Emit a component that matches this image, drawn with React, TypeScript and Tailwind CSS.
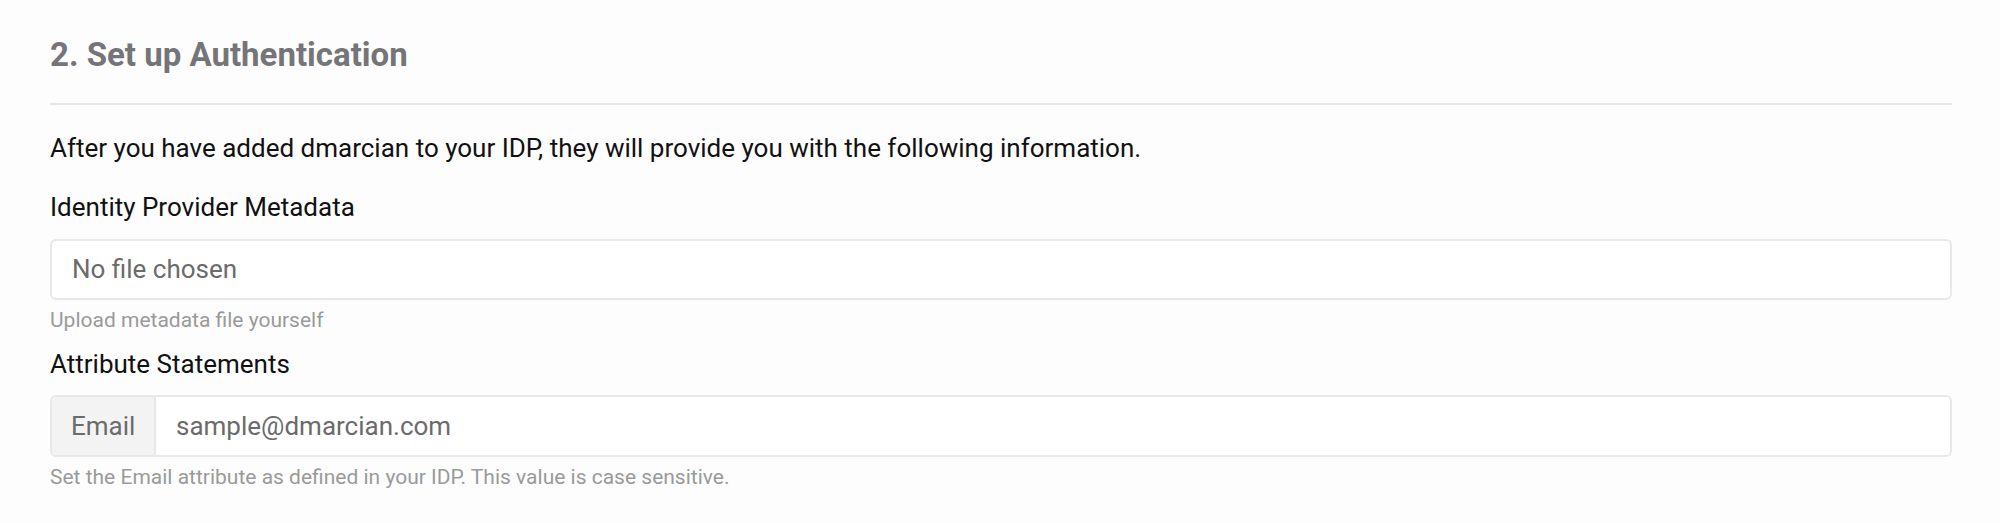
export default function App() {
  return (
    <div className="min-h-screen bg-[#fdfdfd] font-['Roboto',sans-serif]">
      <div className="pl-[50px] pr-[48px] pt-[35px]">
        <h2 className="text-[33px] leading-[40px] font-bold text-[#757579]">2. Set up Authentication</h2>
        <div className="mt-[28px] h-[2px] bg-[#e6e6e6]" />

        <p className="mt-[27px] text-[26px] leading-[32px] text-[#111]">
          After you have added dmarcian to your IDP, they will provide you with the following information.
        </p>

        <div className="mt-[27px]">
          <label className="block text-[26px] leading-[32px] text-[#111]">Identity Provider Metadata</label>
          <div className="mt-[16px] flex h-[61px] items-center rounded-[6px] border-2 border-[#e8e8e8] bg-white pl-[20px] text-[26px] text-[#6b6b6b]">
            No file chosen
          </div>
          <p className="mt-[8px] text-[21px] leading-[24px] text-[#9a9a9a]">Upload metadata file yourself</p>
        </div>

        <div className="mt-[16px]">
          <label className="block text-[26px] leading-[32px] text-[#111]">Attribute Statements</label>
          <div className="mt-[15px] flex h-[62px] overflow-hidden rounded-[6px] border-2 border-[#e8e8e8] bg-white text-[26px] text-[#6b6b6b]">
            <span className="flex w-[104px] items-center border-r-2 border-[#e8e8e8] bg-[#f3f3f3] pl-[19px]">Email</span>
            <span className="flex items-center pl-[20px]">sample@dmarcian.com</span>
          </div>
          <p className="mt-[8px] text-[21px] leading-[24px] text-[#9a9a9a]">
            Set the Email attribute as defined in your IDP. This value is case sensitive.
          </p>
        </div>
      </div>
    </div>
  );
}
